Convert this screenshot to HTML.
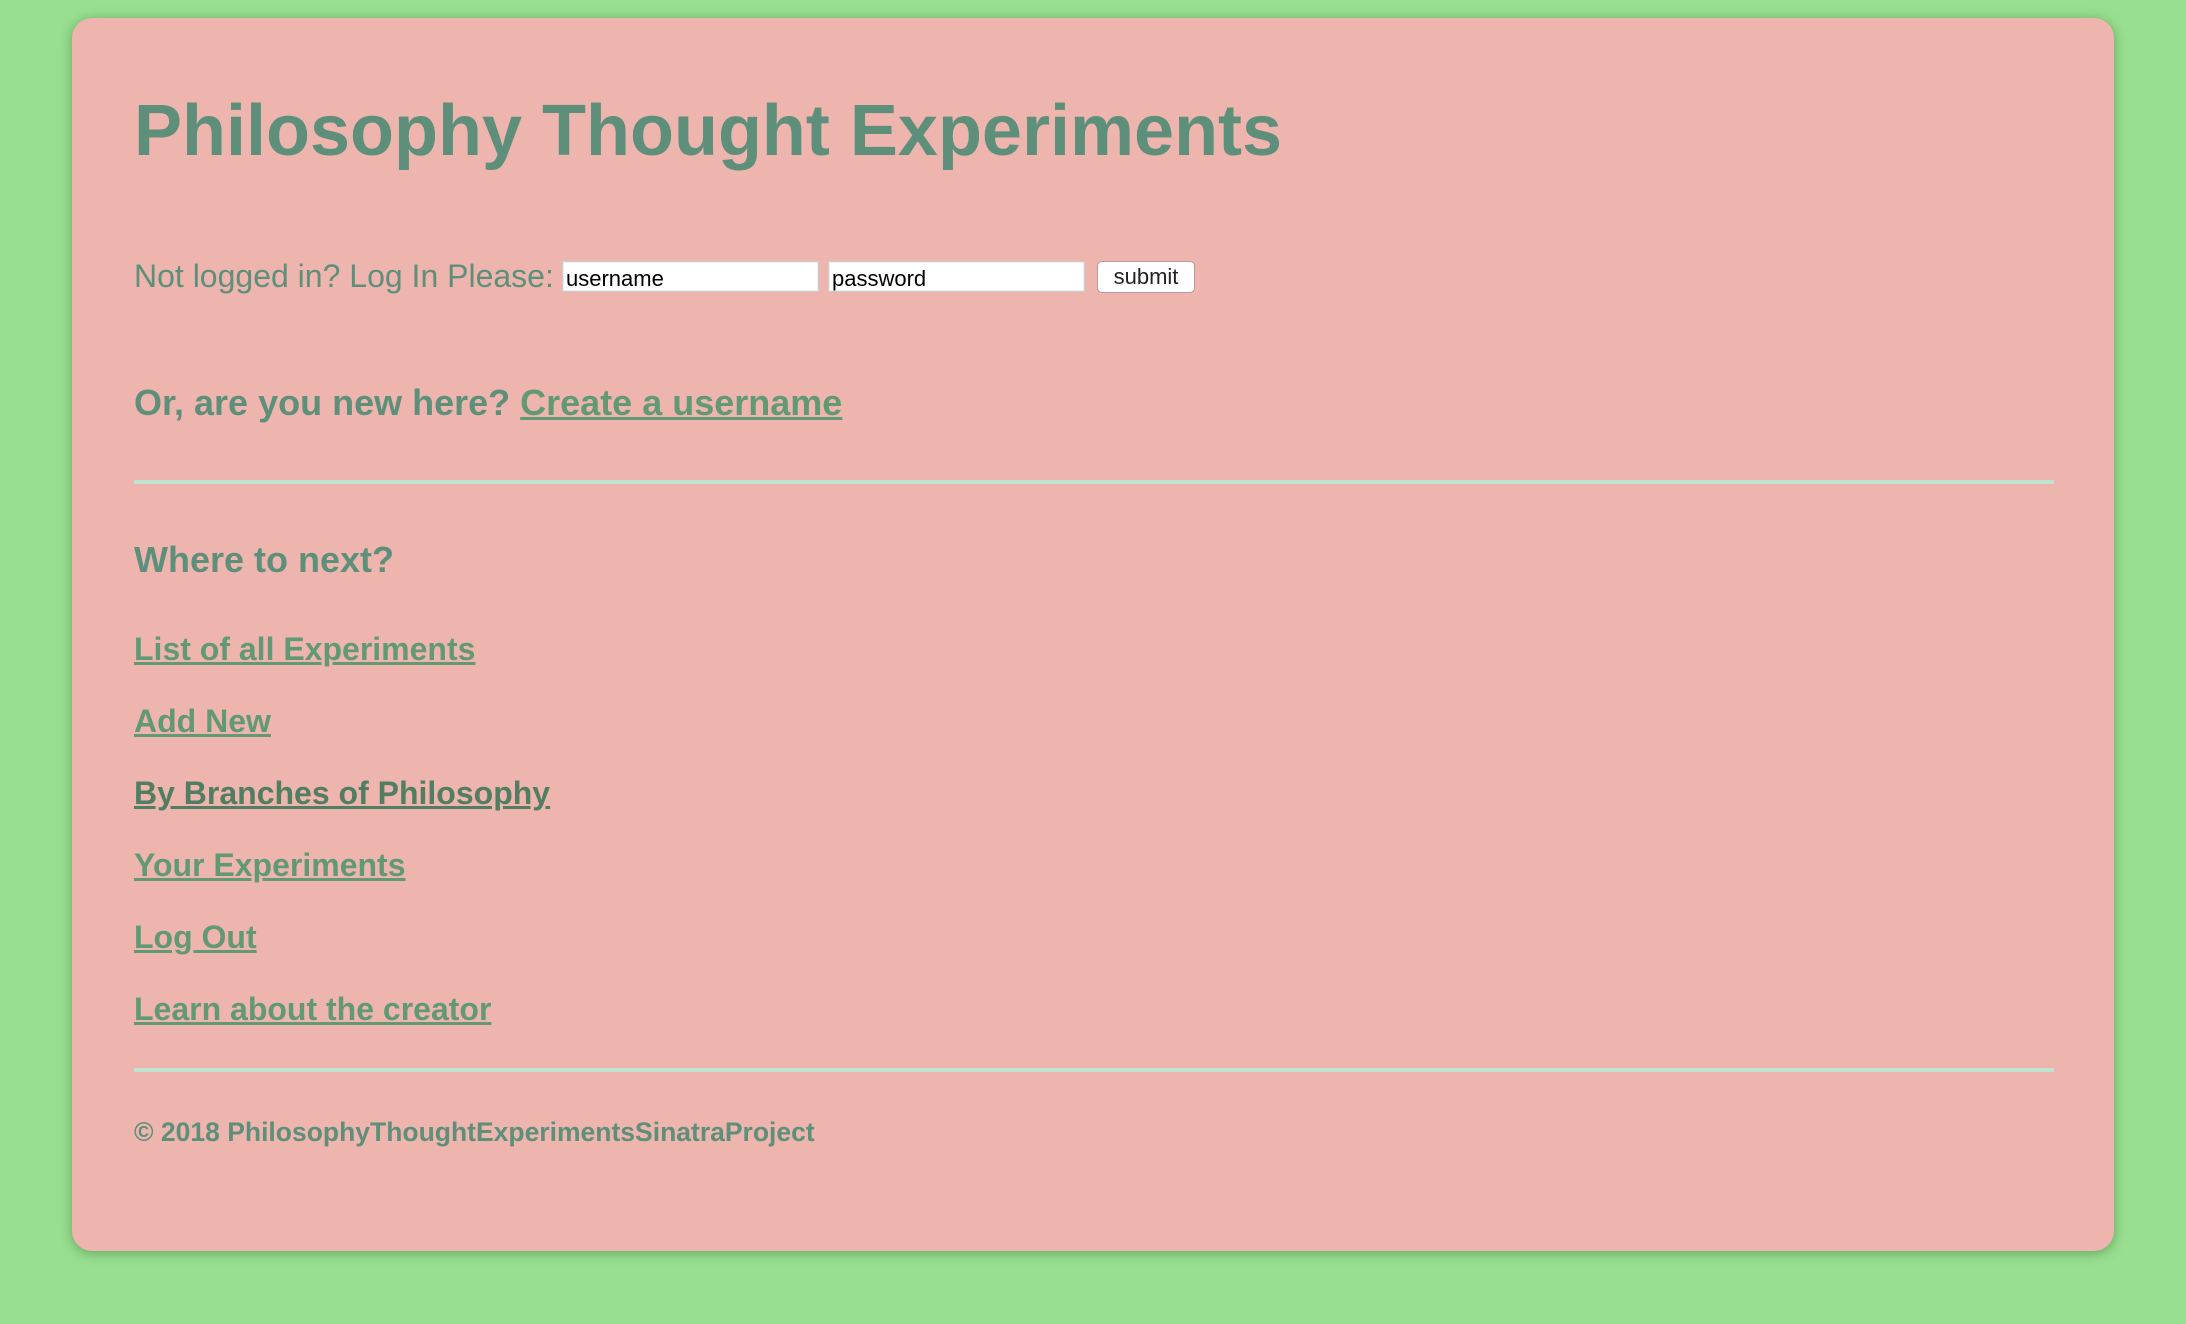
<!DOCTYPE html>
<html><head><meta charset="utf-8"><style>
html,body{margin:0;padding:0;}
body{width:2186px;height:1324px;background:#99df90;position:relative;overflow:hidden;font-family:"Liberation Sans",Arial,sans-serif;color:#5e8f7b;}
.card{position:absolute;left:72px;top:18px;width:2042px;height:1233px;background:#edb5ad;border-radius:20px;box-shadow:0 2px 12px rgba(40,90,40,0.45);}
.t{position:absolute;left:134px;line-height:1;white-space:nowrap;}
a{color:#629975;text-decoration:underline;font-weight:bold;}
.hr{position:absolute;left:134px;width:1920px;height:4px;background:#bfe3cf;}
.in{position:absolute;height:31px;background:#fff;border:1px solid #ccc;box-shadow:inset 0 0 0 1px #eee;font-size:22px;color:#000;line-height:33px;padding-left:3px;box-sizing:border-box;}
.btn{position:absolute;left:1097px;top:261px;width:98px;height:32px;background:#fff;border:1px solid #b99;border-radius:5px;box-sizing:border-box;font-size:22px;color:#222;text-align:center;line-height:30px;}
</style></head><body>
<div class="card"></div>
<div class="t" style="top:95px;font-size:72px;font-weight:bold;">Philosophy Thought Experiments</div>
<div class="t" style="top:260px;font-size:32px;">Not logged in? Log In Please:</div>
<div class="in" style="left:562px;top:261px;width:257px;">username</div>
<div class="in" style="left:828px;top:261px;width:257px;">password</div>
<div class="btn">submit</div>
<div class="t" style="top:385px;font-size:36px;font-weight:bold;">Or, are you new here? <a>Create a username</a></div>
<div class="hr" style="top:480px;"></div>
<div class="t" style="top:542px;font-size:36px;font-weight:bold;">Where to next?</div>
<div class="t" style="top:633px;font-size:32px;"><a>List of all Experiments</a></div>
<div class="t" style="top:705px;font-size:32px;"><a>Add New</a></div>
<div class="t" style="top:777px;font-size:32px;"><a style="color:#517d62">By Branches of Philosophy</a></div>
<div class="t" style="top:849px;font-size:32px;"><a>Your Experiments</a></div>
<div class="t" style="top:921px;font-size:32px;"><a>Log Out</a></div>
<div class="t" style="top:993px;font-size:32px;"><a>Learn about the creator</a></div>
<div class="hr" style="top:1068px;"></div>
<div class="t" style="top:1119px;font-size:26.5px;font-weight:bold;">© 2018 PhilosophyThoughtExperimentsSinatraProject</div>
</body></html>
